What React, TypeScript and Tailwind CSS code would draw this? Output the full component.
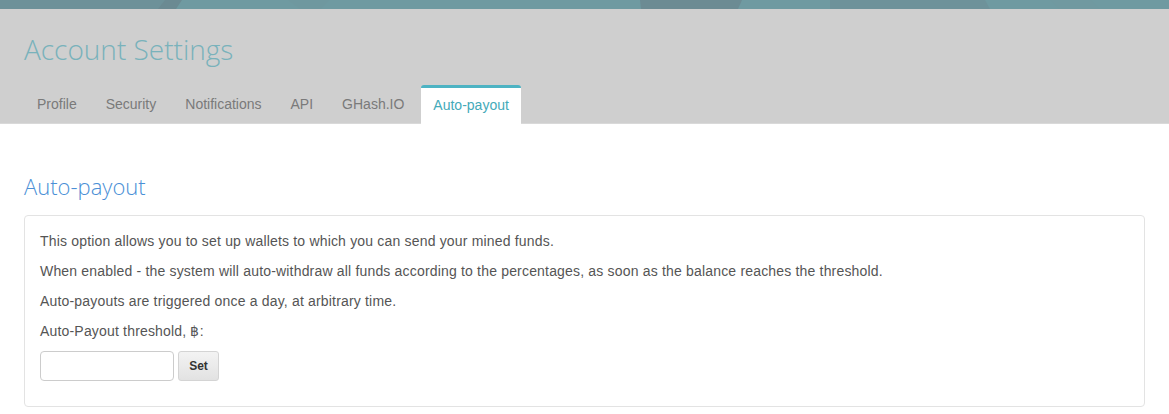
const tabs = ["Profile", "Security", "Notifications", "API", "GHash.IO", "Auto-payout"];

function TopStrip() {
  return (
    <svg className="block h-[9px] w-full" viewBox="0 0 1169 9" preserveAspectRatio="none">
      <rect width="1169" height="9" fill="#6f9aa1" />
      <polygon points="0,0 170,0 160,9 0,9" fill="#6d9199" />
      <polygon points="165,0 182,0 176,9 158,9" fill="#6b8a92" />
      <polygon points="640,0 742,0 738,9 641,9" fill="#6c8b93" />
      <polygon points="830,0 985,0 990,9 830,9" fill="#6e929a" />
      <polygon points="288,0 330,0 320,9 300,9" fill="#6f989f" />
      <polygon points="1050,0 1090,0 1100,9 1060,9" fill="#7099a0" />
    </svg>
  );
}

export default function App() {
  return (
    <div className="min-h-[414px] w-full bg-white font-['Liberation_Sans',Arial,sans-serif]">
      <TopStrip />
      <header className="h-[115px] bg-[#cfcfcf] px-6 border-b border-[#d9d9d9]">
        <h1 className="pt-[20px] font-['Open_Sans',sans-serif] text-[28px] font-light leading-[40px] text-[#79b2bb]">
          Account Settings
        </h1>
        <nav className="mt-[16px] flex gap-[5px] pl-px">
          {tabs.map((tab) =>
            tab === "Auto-payout" ? (
              <div
                key={tab}
                className="h-[39px] rounded-t-[3px] border-t-[3px] border-[#4db3c3] bg-white px-3 pt-[7px] text-[14px] text-[#44aab9]"
              >
                {tab}
              </div>
            ) : (
              <div key={tab} className="h-[39px] px-3 pt-[9px] text-[14px] text-[#7a7a7a]">
                {tab}
              </div>
            )
          )}
        </nav>
      </header>
      <main className="px-6 pt-[46px] pb-2">
        <h2 className="font-['Open_Sans',sans-serif] text-[22px] font-light leading-[32px] text-[#4a8fd6]">
          Auto-payout
        </h2>
        <section className="mt-[13px] rounded-[4px] border border-[#e3e3e3] pl-[15px] pr-4 pt-[15px] pb-[25px] text-[14px] leading-[20px] tracking-[0.18px] text-[#555]">
          <p className="mb-[10px]">This option allows you to set up wallets to which you can send your mined funds.</p>
          <p className="mb-[10px]">
            When enabled - the system will auto-withdraw all funds according to the percentages, as soon as the balance reaches the threshold.
          </p>
          <p className="mb-[10px]">Auto-payouts are triggered once a day, at arbitrary time.</p>
          <p className="mb-[10px]">Auto-Payout threshold, ฿:</p>
          <div className="flex gap-1">
            <input
              type="text"
              className="h-[30px] w-[134px] rounded-[4px] border border-[#cccccc] bg-white px-2 text-[14px] outline-none"
            />
            <button className="h-[30px] w-[41px] rounded-[3px] border border-[#d4d4d4] bg-gradient-to-b from-[#f3f3f3] to-[#e2e2e2] text-[12px] font-bold tracking-normal text-[#333]">
              Set
            </button>
          </div>
        </section>
      </main>
    </div>
  );
}
